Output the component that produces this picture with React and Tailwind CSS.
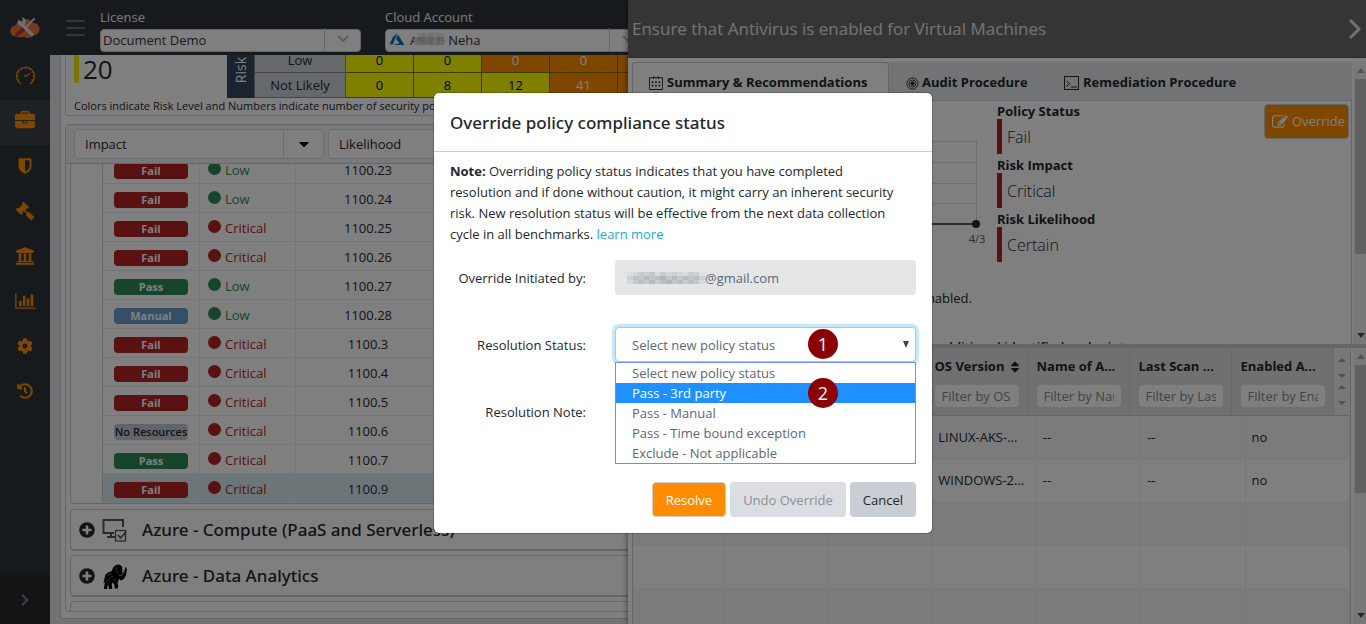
import React from "react";
import { FaGavel, FaUniversity, FaCog, FaHistory, FaChevronRight, FaPlusCircle, FaSort, FaCaretDown } from "react-icons/fa";
import { SlSpeedometer, SlCalender } from "react-icons/sl";

const Briefcase = () => (
  <svg viewBox="0 0 1792 1792" className="size-5" fill="currentColor">
    <path d="M640 256h512v-128h-512v128zm1152 640v480q0 66-47 113t-113 47h-1472q-66 0-113-47t-47-113v-480h672v160q0 26 19 45t45 19h320q26 0 45-19t19-45v-160h672zm-768 0v128h-256v-128h256zm768-480v384h-1792v-384q0-66 47-113t113-47h352v-160q0-40 28-68t68-28h576q40 0 68 28t28 68v160h352q66 0 113 47t47 113z" />
  </svg>
);

const Shield = () => (
  <svg viewBox="0 0 1792 1792" className="size-[18px]" fill="currentColor">
    <path d="M1344 960v-640h-448v1137q119-63 213-137 235-184 235-360zm192-768v768q0 86-33.5 170.5t-83 150-118 127.5-126.5 103-121 77.5-89.5 49.5-42.5 20q-12 6-26 6t-26-6q-16-7-42.5-20t-89.5-49.5-121-77.5-126.5-103-118-127.5-83-150-33.5-170.5v-768q0-26 19-45t45-19h1152q26 0 45 19t19 45z" />
  </svg>
);

const Edit = () => (
  <svg viewBox="0 0 1792 1792" className="size-4" fill="currentColor">
    <path d="M888 1184l116-116-152-152-116 116v56h96v96h56zm440-720q-16-16-33 1l-350 350q-17 17-1 33t33-1l350-350q17-17 1-33zm80 594v190q0 119-84.500 203.500t-203.500 84.500h-832q-119 0-203.500-84.500t-84.500-203.500v-832q0-119 84.500-203.500t203.500-84.500h832q63 0 117 25 15 7 18 23 3 17-9 29l-49 49q-14 14-32 8-23-6-45-6h-832q-66 0-113 47t-47 113v832q0 66 47 113t113 47h832q66 0 113-47t47-113v-126q0-13 9-22l64-64q15-15 35-7t20 29zm-96-738l288 288-672 672h-288v-288zm444 132l-92 92-288-288 92-92q28-28 68-28t68 28l152 152q28 28 28 68t-28 68z" />
  </svg>
);

const BarChart = () => (
  <svg viewBox="0 0 2048 1792" className="h-[18px] w-[21px]" fill="currentColor">
    <path d="M640 896v512h-256v-512h256zm384-512v1024h-256v-1024h256zm1024 1152v128h-2048v-1536h128v1408h1920zm-640-896v768h-256v-768h256zm384-384v1152h-256v-1152h256z" />
  </svg>
);

const Logo = () => (
  <svg viewBox="0 0 30 22" className="h-[22px] w-[30px]">
    <path d="M6 19.500C2 19.500 0 16.500 .3 13.500.6 10.500 3 8.500 5.500 8.500 6.500 5 9.500 3 13 3.500 16 1 21 2 22.500 6c4-.3 7 2.500 7 6 0 3.500-2.500 6-6 6.300C21 21.500 16 21.500 14 19.500c-2.500 1.200-6 1-8 0z" fill="#e8743b" />
    <path d="M7 17.500 15 11" stroke="#c9302c" strokeWidth="3.600" strokeLinecap="round" />
    <path d="M15 11 24 2" stroke="#d5dade" strokeWidth="1.800" strokeLinecap="round" />
    <path d="M12 7.500 22 17.500" stroke="#dde2e6" strokeWidth="3.200" strokeLinecap="round" />
    <path d="M8.500 2.500 11 5.200 13.300 3 11.500 .6C14.500.3 16.500 3 15.500 6 14.500 9 11 9.700 9 8 7.500 6.500 7.500 4 8.500 2.500z" fill="#dde2e6" />
  </svg>
);

const AzureMark = () => (
  <svg viewBox="0 0 16 14" className="h-[13px] w-4">
    <path d="M8.500 0 3.800 4 0 12h3.600z" fill="#0072c6" />
    <path d="M9 1.500 7 6.500l3.800 4.500L3.500 13H16z" fill="#0072c6" />
  </svg>
);

const Monitor = () => (
  <svg viewBox="0 0 26 26" className="size-[26px]" fill="none" stroke="#555" strokeWidth="2">
    <path d="M12 16H1.500V3H21v7" />
    <path d="M5 20h8M9 16v4" />
    <rect x="13.500" y="13.500" width="10" height="10.500" strokeWidth="1.300" />
    <path d="m16 18 2.500 3 6-6.500" strokeWidth="1.700" />
  </svg>
);

const Mammoth = () => (
  <svg viewBox="0 0 26 26" className="size-[26px]">
    <path d="M3 13c1-3 4-4 7-5 .5-3 2.500-6 6-6.500 3 0 4.500 2 4.500 4.500 0 2-.5 3-1 4 2-.5 3.500-3 4-6 1.800.5 1.500 5 .5 8-.8 2.500-2.500 5-5 5.500-1 0-1.500-1-1.500-2-1 1.500-1.500 3-2 4.500l.8 3-.5 2.500h-3l-.5-4-1.500-2-1 1.500.5 5H7l-.8-4-1.200 2 .3 2H2l.5-5 1-2-2 1z" fill="#000" />
    <path d="M5 13c2-2 3-2 5-2.500M7 15l4-2M14 4l1 5 2 2M11 16l3 1M4 19l3-3M5 22l2-3" stroke="#777" strokeWidth=".7" fill="none" />
    <path d="M17 12c2 1 4 0 5.500-3" stroke="#ccc" strokeWidth=".9" fill="none" />
  </svg>
);

const Target = () => (
  <svg viewBox="0 0 14 14" className="size-[13px]" fill="none" stroke="currentColor">
    <circle cx="7" cy="7" r="6" strokeWidth="1" />
    <circle cx="7" cy="7" r="3.800" strokeWidth="1" />
    <circle cx="7" cy="7" r="1.800" fill="currentColor" />
  </svg>
);

const Terminal = () => (
  <svg viewBox="0 0 16 15" className="h-[15px] w-4" fill="none" stroke="currentColor">
    <rect x=".5" y=".5" width="14" height="13" />
    <path d="m2.500 5 3 2.700-3 2.700M7 11h6" />
  </svg>
);

const NAV = [
  ["Dashboard", <SlSpeedometer className="size-[19px]" />],
  ["Policies", <Briefcase />],
  ["Security", <Shield />],
  ["Compliance", <FaGavel className="size-[18px] -scale-x-100" />],
  ["Governance", <FaUniversity className="size-5" />],
  ["Reports", <BarChart />],
  ["Settings", <FaCog className="size-4" />],
  ["History", <FaHistory className="size-4" />],
];

function Sidebar() {
  return (
    <aside className="flex w-[50px] shrink-0 flex-col bg-[#2f353a]">
      <div className="flex h-[55px] items-center justify-center"><Logo /></div>
      <nav className="flex flex-1 flex-col">
        {NAV.map(([name, icon], i) => (
          <a key={name} href="#" aria-label={name} className={`flex h-[45px] items-center justify-center pb-1 text-[#ff8c00] ${i === 1 ? "bg-[#3a4248]" : ""}`}>
            {icon}
          </a>
        ))}
      </nav>
      <button aria-label="Expand" className="flex h-[49px] items-center justify-center bg-[#24282c] text-[#73818f]">
        <FaChevronRight className="size-3.5" />
      </button>
    </aside>
  );
}

function Mosaic({ className, tones, size }) {
  const rows = 3;
  const cols = tones.length / rows;
  return (
    <svg className={className} viewBox={`0 0 ${cols * size} ${rows * size}`} preserveAspectRatio="none" shapeRendering="crispEdges">
      {tones.map((t, i) => (
        <rect key={i} x={(i % cols) * size} y={Math.floor(i / cols) * size} width={size} height={size} fill={t} />
      ))}
    </svg>
  );
}

const ACCOUNT_TONES = [
  "#fafafa", "#e6e6e6", "#dedede", "#ececec", "#e4e4e4", "#eeeeee", "#e4e4e4", "#ededed",
  "#d2d2d2", "#bdbdbd", "#c2c2c2", "#cecece", "#c0c0c0", "#d5d5d5", "#bcbcbc", "#cacaca",
  "#dadada", "#d0d0d0", "#c9c9c9", "#cfcfcf", "#c5c5c5", "#d9d9d9", "#cccccc", "#d4d4d4",
];
const EMAIL_TONES = [
  "#dcdee0", "#d5d8db", "#c8ccd0", "#ccd0d4", "#c3c8cd", "#d8dbde", "#c7ccd0", "#d3d6d9", "#cbcfd3", "#d5d8db", "#d8dbde", "#c8ccd0", "#ccd0d3", "#dcdee0",
  "#cfd2d5", "#bcc1c6", "#c4c8cc", "#b5bbc1", "#c0c5ca", "#b9bec4", "#aeb5bc", "#c2c7cb", "#b1b8be", "#c4c8cc", "#b5bbc1", "#c0c5ca", "#b8bec3", "#ccd0d3",
  "#d5d8db", "#c4c9cd", "#b8bec3", "#c4c8cc", "#b7bcc2", "#c5cacd", "#b9bfc4", "#b0b7bd", "#c4c8cc", "#b8bec3", "#c7cbcf", "#b9bfc4", "#c3c8cc", "#d8dbde",
];

function HeaderSelect({ id, label, value, children }) {
  return (
    <div className="flex w-[261px] shrink-0 flex-col">
      <label htmlFor={id} className="h-[19px] text-[13px] leading-[19px] text-[#f0f3f5]">{label}</label>
      <div className="relative">
        <select id={id} className={`h-[23px] w-full appearance-none rounded border border-[#ccc] bg-white text-[13px] leading-5 text-[#333] ${children ? "pl-6" : "pl-0.5"}`}>
          <option>{value}</option>
        </select>
        {children}
        <span className="pointer-events-none absolute inset-y-px right-px flex w-9 items-center justify-center border-l border-[#ccc]">
          <svg viewBox="0 0 12 8" className="h-2 w-3" fill="none" stroke="#bbb" strokeWidth="2"><path d="m1 1 5 5 5-5" /></svg>
        </span>
      </div>
    </div>
  );
}

function TopBar() {
  return (
    <header className="flex h-[55px] shrink-0 items-start gap-6 bg-[#2f353a] pl-4 pt-2">
      <button aria-label="Menu" className="mr-[-9px] mt-3 flex w-[19px] flex-col gap-[5px]">
        <span className="h-0.5 rounded bg-[#626e7a]" />
        <span className="h-0.5 rounded bg-[#626e7a]" />
        <span className="h-0.5 rounded bg-[#626e7a]" />
      </button>
      <HeaderSelect id="license" label="License" value="Document Demo" />
      <HeaderSelect id="account" label="Cloud Account" value="Azure Neha">
        <span className="pointer-events-none absolute left-1 top-[6px]"><AzureMark /></span>
        <Mosaic className="pointer-events-none absolute left-[29px] top-[6px] h-3 w-[30px]" tones={ACCOUNT_TONES} size={4} />
      </HeaderSelect>
    </header>
  );
}

const MATRIX = [
  ["Low", "0", "0", "0", "0", ""],
  ["Not Likely", "0", "8", "12", "41", ""],
];

function RiskCard() {
  return (
    <section className="flex h-[61px] shrink-0 flex-col justify-end overflow-hidden rounded-b border border-t-0 border-[#c8ced3] bg-white">
      <div className="flex shrink-0 items-end">
        <div className="mb-[15px] ml-2 flex h-7 w-[153px] shrink-0 items-center border-l-[5px] border-[#f0f000] pl-1 text-[26px] text-[#23282c]">20</div>
        <div className="flex w-[27px] shrink-0 items-center justify-center self-stretch bg-[#34495e] pb-1 text-sm text-white">
          <span className="rotate-180 [writing-mode:vertical-rl]">Risk</span>
        </div>
        <table className="table-fixed border-collapse text-[13px]">
          <tbody>
            {MATRIX.map((row) => (
              <tr key={row[0]} className="h-[25px]">
                <th className="w-[91px] border border-[#888] bg-[#ccd2d8] pt-0.5 font-normal text-[#23282c]">{row[0]}</th>
                {row.slice(1).map((v, i) => {
                  const yellow = i < 2 || v === "12";
                  return (
                    <td key={i} className={`w-[68px] min-w-[68px] border border-[#777700] pt-0.5 text-center ${yellow ? "bg-[#ffff00] text-black" : "bg-[#ff8c00] text-white"}`}>{v}</td>
                  );
                })}
              </tr>
            ))}
          </tbody>
        </table>
      </div>
      <p className="h-[17px] shrink-0 whitespace-nowrap pl-2 text-[11px] leading-[16px] text-[#23282c]">Colors indicate Risk Level and Numbers indicate number of security policies</p>
    </section>
  );
}

const ROWS = [
  ["Fail", "Low", "1100.23"],
  ["Fail", "Low", "1100.24"],
  ["Fail", "Critical", "1100.25"],
  ["Fail", "Critical", "1100.26"],
  ["Pass", "Low", "1100.27"],
  ["Manual", "Low", "1100.28"],
  ["Fail", "Critical", "1100.3"],
  ["Fail", "Critical", "1100.4"],
  ["Fail", "Critical", "1100.5"],
  ["No Resources", "Critical", "1100.6"],
  ["Pass", "Critical", "1100.7"],
  ["Fail", "Critical", "1100.9"],
];
const BADGE = {
  Fail: "bg-[#b22222] font-bold text-white",
  Pass: "bg-[#2e8b57] font-bold text-white",
  Manual: "bg-[#6a9fc8] font-bold text-white",
  "No Resources": "bg-[#c3cbd2] font-semibold text-[#23282c]",
};

function FilterSelect({ label }) {
  return (
    <div className="relative w-[250px] shrink-0">
      <select aria-label={label} className="h-[30px] w-full appearance-none rounded border border-[#d5d9dc] bg-white pl-2.5 pt-0.5 text-[13px] text-[#23282c]">
        <option>{label}</option>
      </select>
      <span className="pointer-events-none absolute inset-y-px right-px flex w-10 items-center justify-center border-l border-[#d5d9dc] text-black">
        <FaCaretDown className="size-4" />
      </span>
    </div>
  );
}

function Accordion({ title, icon }) {
  return (
    <button className="flex h-[42px] w-full shrink-0 items-center rounded border border-b-2 border-[#c8ced3] bg-white pl-2 text-left text-[#23282c]">
      <FaPlusCircle className="size-4 shrink-0" />
      <span className="ml-[7px] w-10 shrink-0">{icon}</span>
      <span className="whitespace-nowrap font-['Noto_Sans','Open_Sans',sans-serif] text-[17px] font-medium">{title}</span>
    </button>
  );
}

function PolicyCard() {
  return (
    <section className="flex min-h-0 flex-1 flex-col overflow-hidden rounded border border-[#c8ced3] bg-white">
      <div className="flex h-[39px] shrink-0 items-center gap-1 border-b border-[#c8ced3] bg-[#f0f3f5] pl-2">
        <FilterSelect label="Impact" />
        <FilterSelect label="Likelihood" />
      </div>
      <div className="flex min-h-0 flex-1 flex-col gap-1 overflow-hidden pl-1">
        <div className="mb-px flex h-[340px] shrink-0 flex-col justify-end overflow-hidden rounded-bl border-b border-l border-[#c8ced3] pl-[31px]">
          <table className="w-full table-fixed border-collapse border-l border-[#c8ced3] text-[13px]">
            <tbody>
              {ROWS.map(([status, impact, id], i) => (
                <tr key={id} className={`h-[29px] border-b border-[#e8eaec] ${i === 11 ? "bg-[#d9edf2]" : ""}`}>
                  <td className="w-[97px] border-r border-[#eceeef] pl-[11px]">
                    <span className={`mt-1 flex h-4 w-[74px] items-center justify-center whitespace-nowrap rounded text-[11px] ${BADGE[status]}`}>{status}</span>
                  </td>
                  <td className="w-24 border-r border-[#eceeef] pl-2 pt-[3px]">
                    <span className={`flex items-center gap-1 ${impact === "Low" ? "text-[#2e8b57]" : "text-[#b22222]"}`}>
                      <span className="mb-1 size-[13px] rounded-full bg-current" />
                      {impact}
                    </span>
                  </td>
                  <td className="w-[145px] border-r border-[#eceeef] pt-[3px] text-center text-[#23282c]">{id}</td>
                  <td />
                </tr>
              ))}
            </tbody>
          </table>
        </div>
        <Accordion title="Azure - Compute (PaaS and Serverless)" icon={<Monitor />} />
        <Accordion title="Azure - Data Analytics" icon={<Mammoth />} />
        <Accordion title="" icon={null} />
      </div>
    </section>
  );
}

function Bars({ thumb, className = "" }) {
  return (
    <div className={`flex w-[13px] shrink-0 flex-col items-center bg-[#f1f1f1] pl-0.5 ${className}`}>
      <svg viewBox="0 0 8 5" className="my-1.5 h-[5px] w-2 shrink-0"><path d="M0 5 4 0l4 5z" fill="#a3a3a3" /></svg>
      <span className={`w-full shrink-0 bg-[#c1c1c1] ${thumb}`} />
      <span className="flex-1" />
      <svg viewBox="0 0 8 5" className="my-1.5 h-[5px] w-2 shrink-0"><path d="M0 0l4 5 4-5z" fill="#505050" /></svg>
    </div>
  );
}

function MiniArrows() {
  return (
    <span className="flex flex-col items-center gap-3">
      <svg viewBox="0 0 8 4" className="h-1 w-2"><path d="M0 4 4 0l4 4z" fill="#a3a3a3" /></svg>
      <svg viewBox="0 0 8 4" className="h-1 w-2"><path d="M0 0l4 4 4-4z" fill="#a3a3a3" /></svg>
    </span>
  );
}

function Trend() {
  return (
    <svg viewBox="0 0 350 116" className="h-[116px] w-[350px] shrink-0">
      {[11, 32, 53, 73].map((y) => <path key={y} d={`M20 ${y}.500H338`} stroke="#ddd" />)}
      {[20, 99, 178, 258, 337].map((x) => <path key={x} d={`M${x}.500 11V98`} stroke="#ddd" />)}
      <path d="M20 94H337" stroke="#555" strokeWidth="2" />
      <circle cx="337" cy="94" r="4" fill="#23282c" />
      <text x="338" y="113" textAnchor="middle" fontSize="11" fill="#555">4/3</text>
    </svg>
  );
}

function Status({ label, value }) {
  return (
    <div className="mb-px flex flex-col">
      <dt className="h-[18px] text-[13px] font-bold leading-5 text-[#23282c]">{label}</dt>
      <dd className="flex h-[35px] items-center border-l-[5px] border-[#b22222] pl-[5px] text-base font-light text-[#23282c]">{value}</dd>
    </div>
  );
}

const HEADS = ["", "", "", "OS Version", "Name of A...", "Last Scan ...", "Enabled A..."];
const HINTS = ["", "", "", "Filter by OS Version", "Filter by Name", "Filter by Last Scan", "Filter by Enabled"];
const MACHINES = [
  ["", "", "", "LINUX-AKS-...", "--", "--", "no"],
  ["", "", "", "WINDOWS-2...", "--", "--", "no"],
  ["", "", "", "", "", "", ""],
  ["", "", "", "", "", "", ""],
  ["", "", "", "", "", "", ""],
];

function Drawer() {
  return (
    <aside className="absolute inset-y-0 right-0 flex w-[738px] flex-col bg-white shadow-[0_0_6px_rgba(0,0,0,0.6)]">
      <header className="flex h-[58px] shrink-0 items-center justify-between border-b border-[#555] bg-[#6b6b6b] pl-1 pr-1 text-[17px] text-[#e8e8e8]">
        <h2>Ensure that Antivirus is enabled for Virtual Machines</h2>
        <button aria-label="Close panel">
          <svg viewBox="0 0 14 20" className="h-5 w-3.5" fill="none" stroke="#e0e0e0" strokeWidth="3"><path d="m2 1 9 9-9 9" /></svg>
        </button>
      </header>
      <div className="flex h-[286px] shrink-0 pl-1 pt-1">
        <div className="flex min-w-0 flex-1 flex-col overflow-hidden">
          <div role="tablist" className="flex h-[39px] shrink-0 bg-[#e4e7ea] text-[13px] font-bold text-[#23282c]">
            <button role="tab" aria-selected="true" className="flex w-[257px] items-center gap-1 rounded-t border border-b-0 border-[#c8ced3] bg-white pl-4 pt-0.5">
              <SlCalender className="size-3.5" />Summary &amp; Recommendations
            </button>
            <button role="tab" className="flex w-[158px] items-center gap-[3px] border-b border-[#c8ced3] pl-[17px] pt-1"><Target />Audit Procedure</button>
            <button role="tab" className="flex flex-1 items-center gap-[3px] border-b border-[#c8ced3] pl-[17px] pt-1"><Terminal />Remediation Procedure</button>
          </div>
          <div className="flex flex-1 flex-col overflow-hidden border-x border-[#c8ced3]">
            <div className="flex shrink-0 pl-1.5">
              <div className="pt-[29px]"><Trend /></div>
              <dl className="flex-1 pl-2">
                <Status label="Policy Status" value="Fail" />
                <Status label="Risk Impact" value="Critical" />
                <Status label="Risk Likelihood" value="Certain" />
              </dl>
              <button className="mr-0.5 mt-[3px] flex h-[35px] w-[85px] items-center justify-center gap-1 whitespace-nowrap rounded border border-[#c8ced3] bg-[#ff8c00] pl-1 text-[13px] text-white">
                <Edit />Override
              </button>
            </div>
            <p className="mt-[25px] w-[339px] shrink-0 text-right text-[13px] leading-5 text-[#23282c]">Ensure that antivirus is enabled.</p>
            <p className="mt-[29px] shrink-0 whitespace-nowrap pl-[280px] text-[13px] font-semibold leading-5 text-[#23282c]">the additional identified endpoints</p>
          </div>
        </div>
        <Bars thumb="h-[175px]" className="ml-px" />
      </div>
      <div className="h-1 shrink-0 bg-[#ccc]" />
      <div className="flex min-h-0 flex-1 pl-1">
        <div className="flex min-w-0 flex-1 flex-col overflow-hidden border-x border-[#c8ced3]">
          <div className="flex h-[68px] shrink-0 border-b border-[#ccc] bg-[#e1e1e1]">
            <table className="w-[700px] table-fixed border-collapse text-[13px]">
              <thead>
                <tr>
                  {HEADS.map((h, i) => (
                    <th key={i} className={`border-r border-[#d2d2d2] pl-[9px] pr-2 text-left align-top font-bold text-[#23282c] ${i === 0 ? "w-[88px]" : "w-[102px]"}`}>
                      <div className="flex h-[37px] items-center gap-1 whitespace-nowrap">{h}{h === "OS Version" && <FaSort className="size-3.5 shrink-0" />}</div>
                      <input aria-label={h || "Filter"} placeholder={HINTS[i]} className="block h-[22px] w-full rounded-sm bg-white px-[7px] text-[13px] font-normal placeholder:text-[#888]" />
                    </th>
                  ))}
                </tr>
              </thead>
            </table>
            <div className="flex flex-1 flex-col items-center justify-around bg-[#f1f1f1] py-1.5"><MiniArrows /><MiniArrows /></div>
          </div>
          <table className="w-full shrink-0 table-fixed border-collapse text-[13px] text-[#23282c]">
            <tbody>
              {MACHINES.map((m, r) => (
                <tr key={r} className={`h-[43px] border-b border-[#eee] ${r % 2 === 0 ? "bg-[#f7f7f7]" : "bg-white"}`}>
                  {m.map((v, i) => (
                    <td key={i} className={`overflow-hidden whitespace-nowrap border-r border-[#eee] pl-1.5 ${i === 0 ? "w-[90px]" : ""}`}>{v}</td>
                  ))}
                </tr>
              ))}
            </tbody>
          </table>
        </div>
        <Bars thumb="h-32" className="ml-0.5" />
      </div>
    </aside>
  );
}

const OPTIONS = ["Select new policy status", "Pass - 3rd party", "Pass - Manual", "Pass - Time bound exception", "Exclude - Not applicable"];

const Step = ({ n, className }) => (
  <span className={`pointer-events-none absolute z-10 flex size-[30px] items-center justify-center rounded-full bg-[#8b0000] text-lg text-white ${className}`}>{n}</span>
);

function Modal() {
  return (
    <div className="absolute inset-0 z-20 flex items-center justify-center bg-black/50 pt-0.5">
      <div role="dialog" aria-labelledby="modal-title" className="w-[498px] rounded-[5px] bg-white text-[13px] text-[#23282c] shadow-[0_0_0_1px_rgba(0,0,0,0.2)]">
        <header className="flex h-[59px] items-center border-b border-[#c8ced3] px-4 pt-0.5">
          <h1 id="modal-title" className="font-['Noto_Sans','Open_Sans',sans-serif] text-[17px] font-medium">Override policy compliance status</h1>
        </header>
        <div className="px-4 pb-4 pt-[9px]">
          <p className="pr-3 leading-[21px]">
            <b>Note:</b> Overriding policy status indicates that you have completed resolution and if done without caution, it might carry an inherent security risk. New resolution status will be effective from the next data collection cycle in all benchmarks. <a href="#" className="text-[#20a8d8]">learn more</a>
          </p>
          <div className="mt-[15px] grid grid-cols-[136px_301px] gap-x-[29px] gap-y-8">
            <label htmlFor="initiator" className="h-[35px] text-right leading-[37px]">Override Initiated by:</label>
            <div className="relative">
              <input id="initiator" disabled defaultValue="@gmail.com" className="h-[35px] w-full rounded bg-[#e4e5e6] pl-[90px] text-[#5c6873]" />
              <Mosaic className="absolute left-3 top-3 h-3 w-[78px]" tones={EMAIL_TONES} size={4} />
            </div>
            <label htmlFor="status" className="h-[35px] text-right leading-[37px]">Resolution Status:</label>
            <div className="relative">
              <select id="status" className="h-[35px] w-full appearance-none rounded border border-[#8ad4ee] bg-white pl-4 pt-0.5 text-[#5c6873] shadow-[0_0_0_3px_rgba(32,168,216,0.25)]">
                {OPTIONS.map((o) => <option key={o}>{o}</option>)}
              </select>
              <svg viewBox="0 0 6 7" className="pointer-events-none absolute right-[7px] top-3.5 h-[7px] w-1.5"><path d="M0 0h6L3 7z" fill="#444" /></svg>
              <ul role="listbox" aria-label="Resolution Status" className="absolute left-0 top-[35px] w-full border border-[#6b93d6] bg-white text-[#5c6873]">
                {OPTIONS.map((o, i) => (
                  <li key={o} role="option" aria-selected={i === 1} className={`h-5 pl-4 leading-5 ${i === 1 ? "bg-[#1e90ff] text-white" : ""}`}>{o}</li>
                ))}
              </ul>
              <Step n="1" className="right-[78px] top-0.5" />
              <Step n="2" className="right-[78px] top-[51px]" />
            </div>
            <label htmlFor="note" className="h-[35px] text-right leading-[37px]">Resolution Note:</label>
            <textarea id="note" className="h-16 w-full resize-none rounded border border-[#e4e7ea]" />
          </div>
          <div className="mt-6 flex justify-end gap-1">
            <button className="h-[35px] rounded border border-[#c8ced3] bg-[#ff8c00] px-[13px] pt-0.5 text-white">Resolve</button>
            <button disabled className="h-[35px] rounded bg-[#dadde1] px-[13px] pt-0.5 text-[#8b9096]">Undo Override</button>
            <button className="h-[35px] rounded bg-[#c8ced3] px-[13px] pt-0.5">Cancel</button>
          </div>
        </div>
      </div>
    </div>
  );
}

export default function App() {
  return (
    <div className="relative flex h-screen overflow-hidden bg-[#e4e5e6] font-['Open_Sans','Noto_Sans',sans-serif]">
      <Sidebar />
      <div className="flex min-w-0 flex-1 flex-col">
        <TopBar />
        <main className="flex min-h-0 flex-1 flex-col px-2.5 pb-[5px]">
          <div className="flex min-h-0 flex-1 flex-col gap-2 rounded-b border border-t-0 border-[#c8ced3] bg-white px-1 pb-1.5">
            <RiskCard />
            <PolicyCard />
          </div>
        </main>
      </div>
      <Drawer />
      <Modal />
    </div>
  );
}
